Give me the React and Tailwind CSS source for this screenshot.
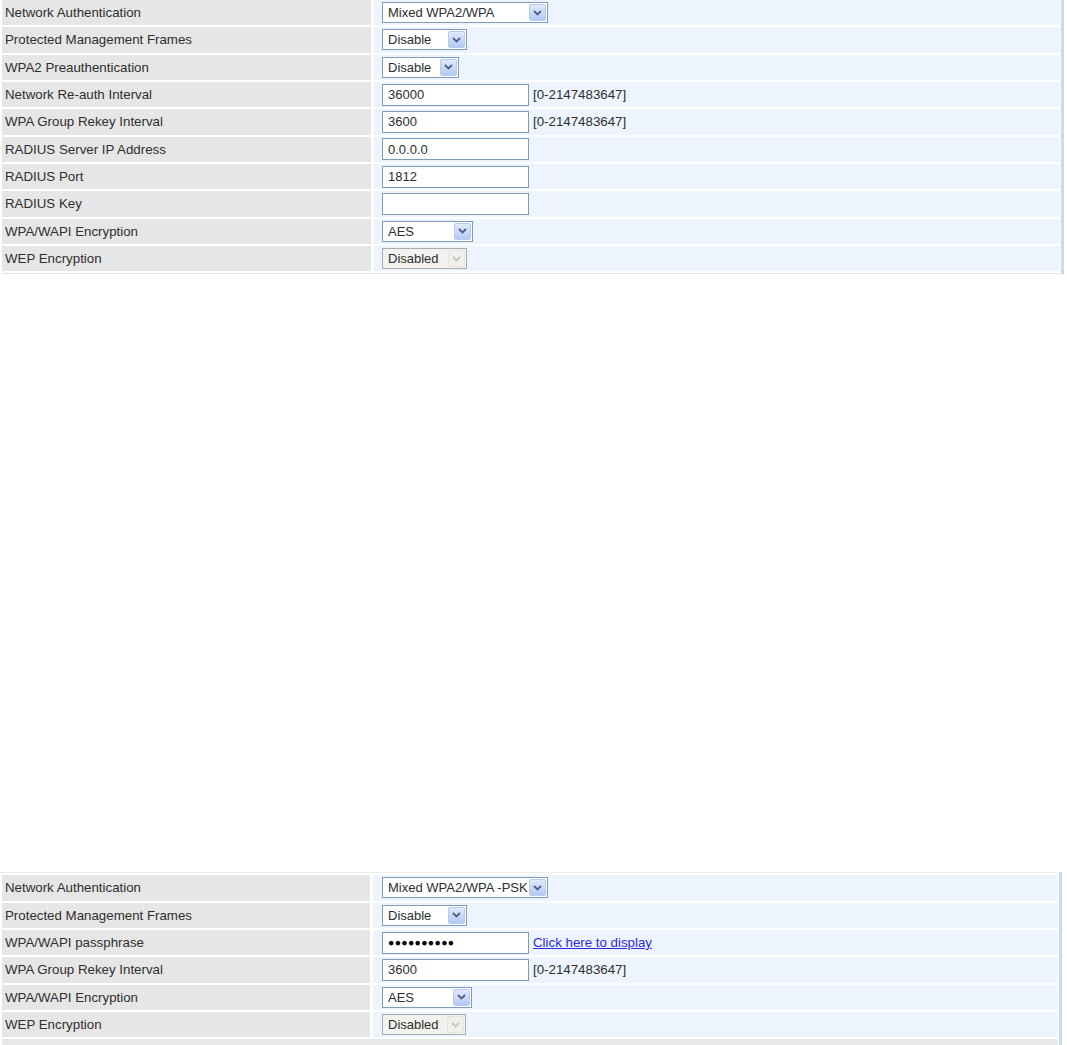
import React from 'react';

const topRows = [
  { label: "Network Authentication", kind: "select", value: "Mixed WPA2/WPA", w: "w-[166px]" },
  { label: "Protected Management Frames", kind: "select", value: "Disable", w: "w-[85px]" },
  { label: "WPA2 Preauthentication", kind: "select", value: "Disable", w: "w-[77px]" },
  { label: "Network Re-auth Interval", kind: "input", value: "36000", hint: "[0-2147483647]" },
  { label: "WPA Group Rekey Interval", kind: "input", value: "3600", hint: "[0-2147483647]" },
  { label: "RADIUS Server IP Address", kind: "input", value: "0.0.0.0" },
  { label: "RADIUS Port", kind: "input", value: "1812" },
  { label: "RADIUS Key", kind: "input", value: "" },
  { label: "WPA/WAPI Encryption", kind: "select", value: "AES", w: "w-[91px]" },
  { label: "WEP Encryption", kind: "select", value: "Disabled", w: "w-[85px]", disabled: true },
];

const bottomRows = [
  { label: "Network Authentication", kind: "select", value: "Mixed WPA2/WPA -PSK", w: "w-[166px]" },
  { label: "Protected Management Frames", kind: "select", value: "Disable", w: "w-[85px]" },
  { label: "WPA/WAPI passphrase", kind: "password", value: "●●●●●●●●●●", link: "Click here to display" },
  { label: "WPA Group Rekey Interval", kind: "input", value: "3600", hint: "[0-2147483647]" },
  { label: "WPA/WAPI Encryption", kind: "select", value: "AES", w: "w-[90px]" },
  { label: "WEP Encryption", kind: "select", value: "Disabled", w: "w-[84px]", disabled: true },
];

const Chevron = ({ disabled }) => (
  <div
    className={`ml-auto mr-[1px] w-[17px] h-[17px] rounded-[2px] border flex items-center justify-center ${
      disabled
        ? "border-[#e4e4e0] bg-[#efefec]"
        : "border-[#b8cbef] bg-gradient-to-b from-[#e1eafc] to-[#b3c9f4]"
    }`}
  >
    <svg width="9" height="6" viewBox="0 0 9 6">
      <polyline
        points="1,1 4.5,4.5 8,1"
        fill="none"
        stroke={disabled ? "#c4c4c0" : "#4d6185"}
        strokeWidth="1.8"
      />
    </svg>
  </div>
);

const Select = ({ value, w, disabled }) => (
  <div
    className={`${w} h-[21px] border flex items-center pl-[5px] ${
      disabled ? "border-[#a5acb2] bg-[#f2f2ef]" : "border-[#7f9db9] bg-white"
    }`}
  >
    <span className="whitespace-nowrap">{value}</span>
    <Chevron disabled={disabled} />
  </div>
);

const Field = ({ row }) => {
  if (row.kind === "select") return <Select value={row.value} w={row.w} disabled={row.disabled} />;
  return (
    <>
      <div className="w-[147px] h-[22px] border border-[#7f9db9] bg-white flex items-center pl-[5px]">
        {row.kind === "password" ? (
          <span className="text-[10.5px] tracking-[0.3px] text-black">{row.value}</span>
        ) : (
          row.value
        )}
      </div>
      {row.hint && <span className="ml-[4px] text-[13.3px]">{row.hint}</span>}
      {row.link && (
        <a href="#" className="ml-[4px] text-[13.3px] text-[#2a2ae0] underline">
          {row.link}
        </a>
      )}
    </>
  );
};

const Table = ({ rows, labelW, gapW, valuePad }) => (
  <div className="pl-[2px]">
    <div className="flex flex-col gap-[2px]">
      {rows.map((row, i) => (
        <div key={i} className="flex h-[25.33px]">
          <div className={`${labelW} bg-[#e6e6e6] pl-[3px] flex items-center text-[13.3px]`}>{row.label}</div>
          <div className={`${gapW} bg-white`}></div>
          <div className={`flex-1 bg-[#edf4fd] flex items-center ${valuePad}`}>
            <Field row={row} />
          </div>
        </div>
      ))}
    </div>
  </div>
);

export default function App() {
  return (
    <div
      className="w-[1067px] h-[1045px] bg-white overflow-hidden text-[13px] text-[#2e2e2e] leading-none"
      style={{ fontFamily: "'Liberation Sans', Arial, sans-serif" }}
    >
      {/* WPA2/WPA with RADIUS */}
      <div className="flex w-[1064px]">
        <div className="w-[1060px]">
          <Table rows={topRows} labelW="w-[369px]" gapW="w-[3px]" valuePad="pl-[8px]" />
          <div className="h-[2px]"></div>
          <div className="ml-[2px] h-[1px] bg-[#e2e2e2]"></div>
        </div>
        <div className="w-[1px]"></div>
        <div className="w-[3px] bg-[#c9daee]"></div>
      </div>

      {/* WPA2/WPA-PSK */}
      <div className="mt-[598px] flex w-[1062px]">
        <div className="w-[1058px]">
          <div className="h-[1px] bg-[#ececec]"></div>
          <div className="h-[2px]"></div>
          <Table rows={bottomRows} labelW="w-[368px]" gapW="w-[3px]" valuePad="pl-[9px]" />
          <div className="h-[2px]"></div>
          <div className="ml-[2px] h-[8px] bg-[#e8e8e8]"></div>
        </div>
        <div className="w-[1px]"></div>
        <div className="w-[3px] bg-[#c9daee]"></div>
      </div>
    </div>
  );
}
